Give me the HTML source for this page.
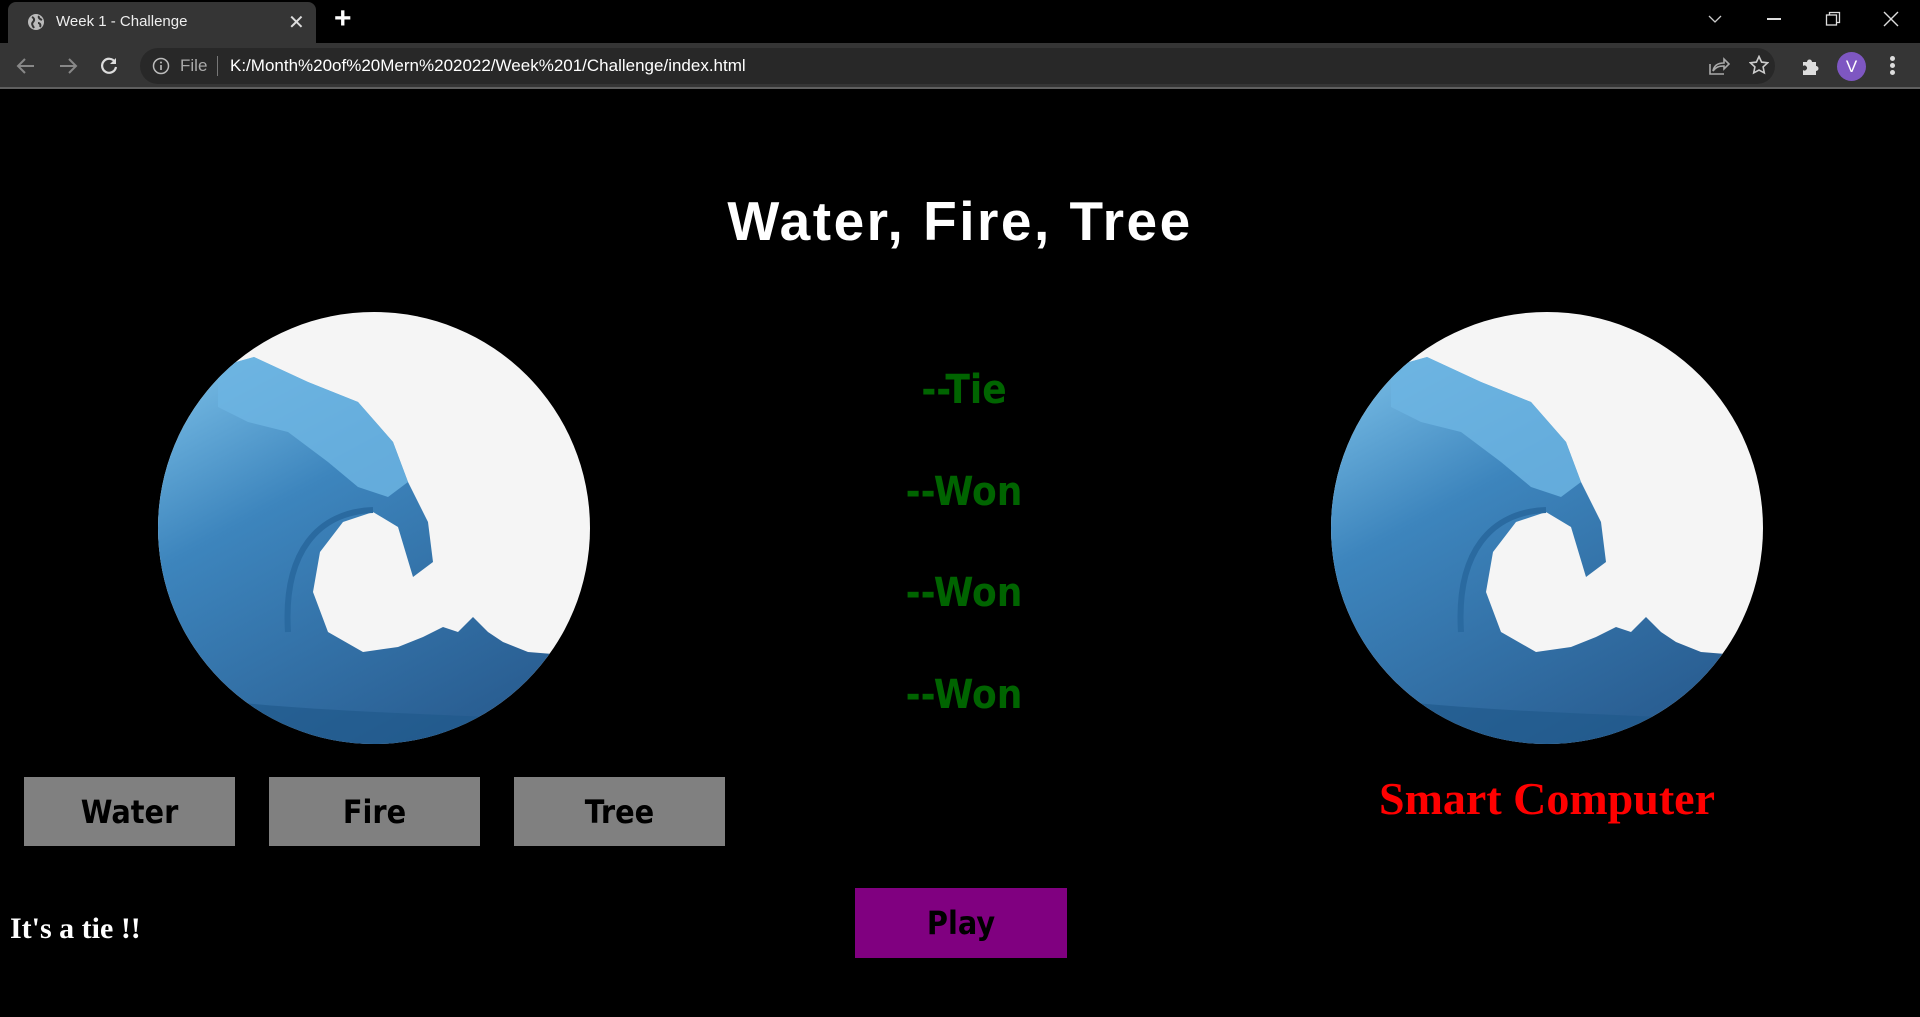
<!DOCTYPE html>
<html><head><meta charset="utf-8"><style>
*{margin:0;padding:0;box-sizing:border-box}
body{width:1920px;height:1017px;background:#000;overflow:hidden;position:relative;font-family:"Liberation Sans",sans-serif}
.tabbar{position:absolute;left:0;top:0;width:1920px;height:43px;background:#000}
.tab{position:absolute;left:8px;top:2px;width:308px;height:41px;background:#353535;border-radius:8px 8px 0 0}
.toolbar{position:absolute;left:0;top:43px;width:1920px;height:46px;background:#353535;border-bottom:2px solid #5f5f5f}
.omni{position:absolute;left:140px;top:5px;width:1635px;height:36px;border-radius:18px;background:#282828}
.t{position:absolute;color:#fff;white-space:nowrap}
.btn{position:absolute;background:#808080;color:#000;font-weight:bold;font-size:32px;display:flex;align-items:center;justify-content:center;font-family:"DejaVu Sans Condensed","DejaVu Sans",sans-serif}
.res{position:absolute;left:764px;width:400px;text-align:center;color:#006400;font-size:40px;font-family:"DejaVu Sans Condensed","DejaVu Sans",sans-serif;font-weight:bold}
.wave{position:absolute;width:432px;height:432px;border-radius:50%;overflow:hidden}
</style></head><body>
<div class="tabbar">
 <div class="tab">
  <svg style="position:absolute;left:19px;top:11px" width="18" height="18" viewBox="0 0 18 18"><circle cx="9" cy="9" r="8" fill="#bbb"/><path d="M5 4c2 1 3 3 1 5s0 4 1 6M12 3c-1 2 1 3 3 4M11 10c2 0 3 2 2 4" stroke="#353535" stroke-width="2" fill="none"/></svg>
  <div class="t" style="left:48px;top:11px;font-size:15px;color:#eee">Week 1 - Challenge</div>
  <div class="t" style="left:280px;top:8px;font-size:20px;color:#ddd">✕</div>
 </div>
 <div class="t" style="left:334px;top:2px;font-size:30px;font-weight:bold">+</div>
 <svg style="position:absolute;left:1708px;top:14px" width="14" height="10"><path d="M1 2l6 6 6-6" stroke="#ccc" fill="none" stroke-width="1.3"/></svg>
 <div style="position:absolute;left:1767px;top:18px;width:14px;height:1.5px;background:#ddd"></div>
 <svg style="position:absolute;left:1825px;top:11px" width="16" height="16"><rect x="1.5" y="4" width="10" height="10" fill="none" stroke="#ddd" stroke-width="1.3"/><path d="M4.5 4V1.5h10v10H12" fill="none" stroke="#ddd" stroke-width="1.3"/></svg>
 <svg style="position:absolute;left:1883px;top:11px" width="16" height="16"><path d="M1 1l14 14M15 1L1 15" stroke="#ddd" stroke-width="1.4"/></svg>
</div>
<div class="toolbar">
 <svg style="position:absolute;left:16px;top:13px" width="20" height="20"><path d="M18 10H3M9 3l-7 7 7 7" stroke="#888" stroke-width="2" fill="none"/></svg>
 <svg style="position:absolute;left:58px;top:13px" width="20" height="20"><path d="M2 10h15M11 3l7 7-7 7" stroke="#888" stroke-width="2" fill="none"/></svg>
 <svg style="position:absolute;left:99px;top:13px" width="20" height="20"><path d="M16 6A7 7 0 1 0 17 11" stroke="#ddd" stroke-width="2.2" fill="none"/><path d="M17 2v6h-6z" fill="#ddd"/></svg>
 <div class="omni">
  <svg style="position:absolute;left:12px;top:9px" width="18" height="18"><circle cx="9" cy="9" r="7.5" stroke="#bbb" stroke-width="1.5" fill="none"/><rect x="8.2" y="8" width="1.6" height="5" fill="#bbb"/><circle cx="9" cy="5.5" r="1" fill="#bbb"/></svg>
  <div class="t" style="left:40px;top:8px;font-size:17px;color:#aaa">File</div>
  <div style="position:absolute;left:77px;top:8px;width:1px;height:20px;background:#777"></div>
  <div class="t" style="left:90px;top:8px;font-size:17px;color:#fff">K:/Month%20of%20Mern%202022/Week%201/Challenge/index.html</div>
  <svg style="position:absolute;left:1568px;top:8px" width="22" height="20"><path d="M2 8v10h14" stroke="#aaa" stroke-width="1.6" fill="none"/><path d="M5 15c1-6 5-8 11-8V3l5 5-5 5V10c-5 0-8 1-11 5z" stroke="#aaa" stroke-width="1.6" fill="none"/></svg>
  <svg style="position:absolute;left:1609px;top:7px" width="20" height="20"><path d="M10 1.5l2.6 5.6 6 .7-4.5 4.1 1.2 6L10 15l-5.3 2.9 1.2-6L1.4 7.8l6-.7z" stroke="#ccc" stroke-width="1.6" fill="none"/></svg>
 </div>
 <svg style="position:absolute;left:1800px;top:12px" width="22" height="22"><path d="M3 7h4a2.5 2.5 0 1 1 5 0h4v4a2.5 2.5 0 1 1 0 5v4H3v-5a2.5 2.5 0 1 0 0-4z" fill="#ddd"/></svg>
 <div style="position:absolute;left:1837px;top:9px;width:29px;height:29px;border-radius:50%;background:#7e57c2;color:#fff;font-size:17px;text-align:center;line-height:29px">V</div>
 <div style="position:absolute;left:1890px;top:13px;width:5px;height:5px;border-radius:50%;background:#ddd;box-shadow:0 7px 0 #ddd,0 14px 0 #ddd"></div>
</div>

<div class="t" style="left:0;width:1920px;text-align:center;top:189px;font-size:55px;font-weight:bold;letter-spacing:2.5px">Water, Fire, Tree</div>

<svg width="0" height="0" style="position:absolute"><defs>
<linearGradient id="g" x1="0" y1="0" x2="0.6" y2="1"><stop offset="0" stop-color="#7fc3ea"/><stop offset="0.4" stop-color="#3d85bd"/><stop offset="1" stop-color="#2a5f93"/></linearGradient>
<symbol id="w" viewBox="0 0 432 432">
 <rect width="432" height="432" fill="#f5f5f5"/>
 <path d="M0 70 L60 55 L96 45 L150 70 L200 90 L235 130 L250 170 L270 210 L275 250 L255 265 L240 215 L215 200 L185 210 L162 240 L155 280 L170 320 L205 340 L240 335 L265 325 L285 315 L300 320 L315 305 L330 320 L345 330 L370 340 L432 345 L432 432 L0 432Z" fill="url(#g)"/>
 <path d="M60 55 L96 45 L150 70 L200 90 L235 130 L250 170 L230 185 L200 175 L170 150 L130 120 L90 110 L60 95Z" fill="#6cb4e2" opacity=".85"/>
 <path d="M0 380 C120 400 250 400 432 410 L432 432 L0 432Z" fill="#215a8c" opacity=".7"/>
 <path d="M130 320 C125 240 160 200 215 198" stroke="#2a6aa0" stroke-width="6" fill="none"/>
</symbol></defs></svg>
<div class="wave" style="left:158px;top:312px"><svg width="432" height="432"><use href="#w"/></svg></div>
<div class="wave" style="left:1331px;top:312px"><svg width="432" height="432"><use href="#w"/></svg></div>

<div class="res" style="top:367px">--Tie</div>
<div class="res" style="top:469px">--Won</div>
<div class="res" style="top:570px">--Won</div>
<div class="res" style="top:672px">--Won</div>

<div class="btn" style="left:24px;top:777px;width:211px;height:69px">Water</div>
<div class="btn" style="left:269px;top:777px;width:211px;height:69px">Fire</div>
<div class="btn" style="left:514px;top:777px;width:211px;height:69px">Tree</div>
<div class="btn" style="left:855px;top:888px;width:212px;height:70px;background:#800080">Play</div>

<div class="t" style="left:1147px;width:800px;text-align:center;top:772px;font-size:46px;font-weight:bold;color:#f00;font-family:'Liberation Serif',serif">Smart Computer</div>
<div class="t" style="left:10px;top:912px;font-size:30px;font-weight:bold;font-family:'Liberation Serif',serif">It's a tie !!</div>
</body></html>
